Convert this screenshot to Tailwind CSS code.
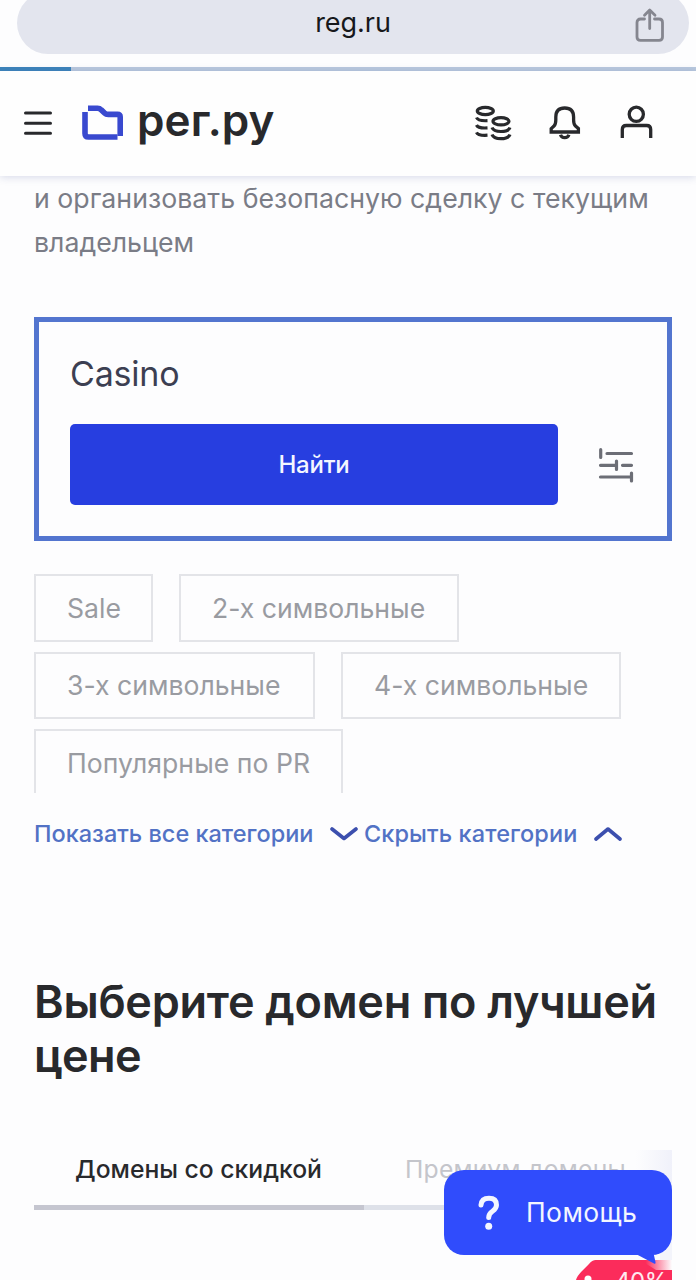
<!DOCTYPE html>
<html lang="ru">
<head>
<meta charset="utf-8">
<title>рег.ру</title>
<script src="https://cdn.jsdelivr.net/npm/@tailwindcss/browser@4"></script>
</head>
<body class="h-[1280px] w-[696px] overflow-hidden bg-[#fdfdfe] font-['Inter','Liberation_Sans',sans-serif] text-[#28292c]">
<div class="relative flex h-[1280px] w-[696px] flex-col overflow-hidden">
  <div class="h-[67px] shrink-0 pr-[7px] pl-[17px]">
    <div class="relative mt-[-8px] flex h-[62px] items-start justify-center rounded-full bg-[#e3e5ee] pt-[12px]">
      <span class="text-[27px] leading-[38px] tracking-[-0.05px] whitespace-nowrap text-[#17181c]">reg.ru</span>
      <svg class="absolute top-[15px] right-[23px]" width="32" height="36" viewBox="0 0 32 36" fill="none" stroke="#85868f" stroke-width="2.800" stroke-linecap="round" stroke-linejoin="round"><path d="M10.500 12H6.500Q3 12 3 15.500V30Q3 33.300 6.500 33.300H25Q28.500 33.300 28.500 30V15.500Q28.500 12 25 12H20.500M15.700 21.500V3.500M10.500 8.200L15.700 3L21 8.200"/></svg>
    </div>
  </div>
  <div class="h-[4px] shrink-0 bg-[#b9c9de]"><div class="h-full w-[71px] bg-[#3c84bb]"></div></div>
  <header class="relative z-10 flex h-[105px] shrink-0 items-center bg-[#fefefe] pl-[24px] shadow-[0_1px_8px_rgba(70,80,150,0.22)]">
    <svg class="shrink-0" width="28" height="28" viewBox="0 0 28 28" stroke="#28292c" stroke-width="3" stroke-linecap="round"><path d="M1.500 3H26.500M1.500 13.200H26.500M1.500 23.200H26.500"/></svg>
    <svg class="mt-[-2px] ml-[30px] shrink-0" width="42" height="36" viewBox="0 0 42 36" fill="none" stroke="#3949cf" stroke-width="5.600"><path d="M6 3.300H15.500Q17.700 3.300 19.300 4.900L22.500 7.900Q24 9.400 26.200 9.400H35.500Q38.200 9.400 38.200 12.100V31"/><path d="M3 7V28.500Q3 32 6.500 32H35.500"/></svg>
    <span id="logo" class="mt-[-8px] ml-[13px] text-[44px] leading-[52px] font-semibold tracking-[0.1px]">рег.ру</span>
    <div class="absolute top-[34px] left-[475px] flex items-center gap-[36px]">
      <svg width="38" height="36" viewBox="0 0 38 36" fill="none" stroke="#28292c" stroke-width="3.200"><ellipse cx="10.300" cy="6" rx="8" ry="3.600"/><ellipse cx="26" cy="16.300" rx="8" ry="3.600"/><path d="M1.500 12.500Q3 16.200 12.500 15.700M1.500 20Q3 23.500 12.500 22.900M1.500 27.300Q3 30.800 12.500 30.200M17 22.500Q18.500 26.500 26 26.500T35 22.500M17 29.500Q18.500 33.700 26 33.700T35 29.500"/></svg>
      <svg width="32" height="36" viewBox="0 0 32 36" fill="none" stroke="#28292c" stroke-width="3.300"><path d="M2.200 27V23.600L5 21Q6.800 19.300 6.800 15V12Q6.800 3 15.700 3T24.600 12V15Q24.600 19.300 26.500 21L29.400 23.600V27Z"/><path d="M11.500 29.700Q12.500 32.700 15.700 32.700T19.900 29.700"/></svg>
      <svg class="ml-[3px]" width="33" height="36" viewBox="0 0 33 36" fill="none" stroke="#28292c" stroke-width="3.300"><circle cx="16.300" cy="9.300" r="7.100"/><path d="M2.300 33V24.500Q2.300 20.500 6.300 20.500H26.700Q30.700 20.500 30.700 24.500V33"/></svg>
    </div>
  </header>
  <main class="flex grow flex-col px-[34px]">
    <p class="text-[26.700px] leading-[44px] whitespace-nowrap text-[#7a7c86]"><span id="p1" class="tracking-[0.02px]">и организовать безопасную сделку с текущим</span><br><span id="p2">владельцем</span></p>
    <form class="mt-[53px] h-[224px] w-[638px] shrink-0 border-[5px] border-[#5375cf] px-[31px] pt-[32px]">
      <div class="text-[34px] leading-[40px] tracking-[-0.2px] text-[#3c3f52]"><span id="casino">Casino</span></div>
      <div class="mt-[30px] flex items-center">
        <button type="button" class="h-[81px] w-[488px] rounded-[5px] bg-[#273ee0] pt-px text-[24px] font-medium tracking-[-0.2px] text-[#f4f6ff]"><span id="find">Найти</span></button>
        <svg class="ml-[40px]" width="36" height="36" viewBox="0 0 36 36" fill="none" stroke="#6c6e76" stroke-width="3.200" stroke-linecap="round"><path d="M2.700 2.700V10.500M9 6.500H33.500M2.500 18.300H18M18.500 14V22.500M24.500 18.300H33.500M2.500 30H33M33.500 26V34"/></svg>
      </div>
    </form>
    <div class="mt-[33px] flex h-[219px] shrink-0 flex-col gap-[10px] overflow-hidden text-[26.600px] whitespace-nowrap text-[#999ba1]">
      <div class="flex shrink-0 gap-[26px]">
        <div class="flex h-[68px] w-[119px] items-center border-2 border-[#e3e4e8] pt-px pl-[31px]"><span id="c1">Sale</span></div>
        <div class="flex h-[68px] w-[280px] items-center border-2 border-[#e3e4e8] pt-px pl-[31px]"><span id="c2">2-х символьные</span></div>
      </div>
      <div class="flex shrink-0 gap-[26px]">
        <div class="flex h-[67px] w-[281px] items-center border-2 border-[#e3e4e8] pt-px pl-[31px]"><span id="c3">3-х символьные</span></div>
        <div class="flex h-[67px] w-[280px] items-center border-2 border-[#e3e4e8] pt-px pl-[31px]"><span id="c4">4-х символьные</span></div>
      </div>
      <div class="flex h-[68px] w-[309px] shrink-0 items-center border-2 border-[#e3e4e8] pt-px pl-[31px]"><span id="c5" class="tracking-[0.05px]">Популярные по PR</span></div>
    </div>
    <div class="mt-[21px] flex h-[40px] shrink-0 items-center text-[23.500px] font-medium whitespace-nowrap text-[#5272c5]">
      <span id="l1" class="w-[296px]">Показать все категории</span>
      <svg class="shrink-0" width="28" height="16" viewBox="0 0 28 16" fill="none" stroke="#3c4fae" stroke-width="3.600" stroke-linecap="round" stroke-linejoin="round"><path d="M2 3L14 12.500L26 3"/></svg>
      <span id="l2" class="ml-[6px] w-[230px] tracking-[0.1px]">Скрыть категории</span>
      <svg class="shrink-0" width="28" height="16" viewBox="0 0 28 16" fill="none" stroke="#3c4fae" stroke-width="3.600" stroke-linecap="round" stroke-linejoin="round"><path d="M2 13L14 3L26 13"/></svg>
    </div>
    <h1 class="mt-[121px] text-[45px] leading-[54px] font-semibold tracking-[-0.250px] whitespace-nowrap"><span id="h1">Выберите домен по лучшей</span><br><span id="h2" class="tracking-[-0.600px]">цене</span></h1>
    <div class="mt-[67px] flex h-[60px] w-[638px] shrink-0 text-[24.700px] whitespace-nowrap">
      <div class="w-[330px] border-b-[5px] border-[#c5c6d0] pl-[41px] leading-[38px] font-medium"><span id="t1">Домены со скидкой</span></div>
      <div class="grow border-b-[5px] border-[#dee1e9] bg-[linear-gradient(90deg,transparent_calc(100%-36px),#f0f1fa)] pl-[41px] leading-[38px] tracking-[0.250px] text-[#c4c5cb]"><span id="t2">Премиум домены</span></div>
    </div>
  </main>
  <div class="absolute top-[1210px] left-[660px] h-[50px] w-[12px] bg-[#f3f4fb]"></div>
  <svg class="absolute top-[1259px] left-[574px]" width="98" height="21" viewBox="0 0 98 21"><defs><linearGradient id="tag" x1="0" y1="0" x2="1" y2="0"><stop offset="0.700" stop-color="#fb2c5b"/><stop offset="1" stop-color="#fb2c5b" stop-opacity="0"/></linearGradient></defs><path fill="url(#tag)" d="M22 1H98V12H10Z"/><path fill="#fb2c5b" d="M22 1H66L82 11H98V21H2Q3 17 8 12L15 5Q18 1 22 1Z"/><circle cx="14" cy="20" r="3.500" fill="#fff"/></svg>
  <div class="absolute top-[1267px] left-[615px] h-[13px] overflow-hidden text-[24px] leading-[30px] tracking-[-0.500px] text-[#ffe9ef]">40%</div>
  <svg class="absolute top-[1250px] left-[630px]" width="30" height="15" viewBox="0 0 30 15"><path fill="#304cfc" d="M4 3L24 13.500Q26 14.500 25.500 12L23 1Z"/></svg>
  <button type="button" class="absolute top-[1170px] left-[444px] flex h-[85px] w-[228px] items-center rounded-[20px] bg-[#304cfc] pl-[34px] text-white">
    <svg width="24" height="36" viewBox="0 0 24 36" fill="none" stroke="#f3f6ff" stroke-width="5" stroke-linecap="round"><path d="M3 10Q3.500 3.200 11 3.200Q18.500 3.200 18.500 10Q18.500 13.500 14.500 16.200Q10.700 18.700 10.700 22.500"/><circle cx="10.700" cy="31.300" r="3.500" fill="#f3f6ff" stroke="none"/></svg>
    <span id="help" class="mt-px ml-[24px] text-[26.500px] tracking-[0.400px] text-[#f3f6ff]">Помощь</span>
  </button>
</div>
</body>
</html>
